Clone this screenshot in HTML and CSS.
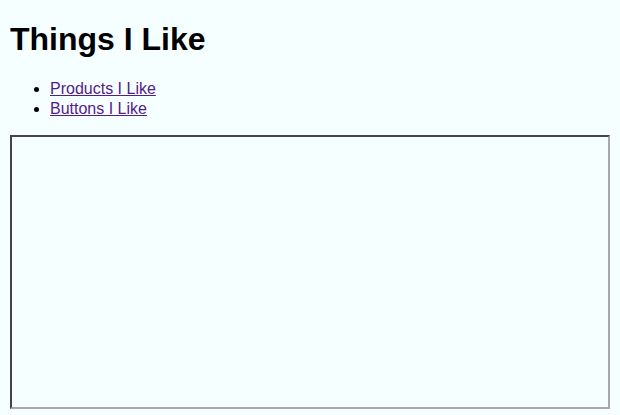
FILE: index.html
```html
<!DOCTYPE html>
<html>
  <head>
    <title>Things I Like</title>
    <link rel="stylesheet" href="styles.css">
  </head>
  <body>
    <h1>Things I Like</h1>

    <ul class="nav">
      <li><a href="#products">Products I Like</a></li>
      <li><a href="#buttons">Buttons I Like</a></li>
    </ul>

    <!-- content frame -->
    <div class="frame"></div>
  </body>
</html>
```

FILE: styles.css
```css
body {
  margin: 0 10px;
  background: #f5ffff;
  font-family: "Liberation Sans", Arial, sans-serif;
}
h1 {
  font-size: 32px;
  margin: 21px 0;
}
.nav {
  margin: 21px 0 16px;
}
.nav li {
  line-height: 20px;
}
.nav a {
  color: #551a8b;
}
.frame {
  box-sizing: border-box;
  width: 100%;
  height: 274px;
  border: 2px solid;
  border-color: #444444 #a8a8a8 #a8a8a8 #444444;
}
```
